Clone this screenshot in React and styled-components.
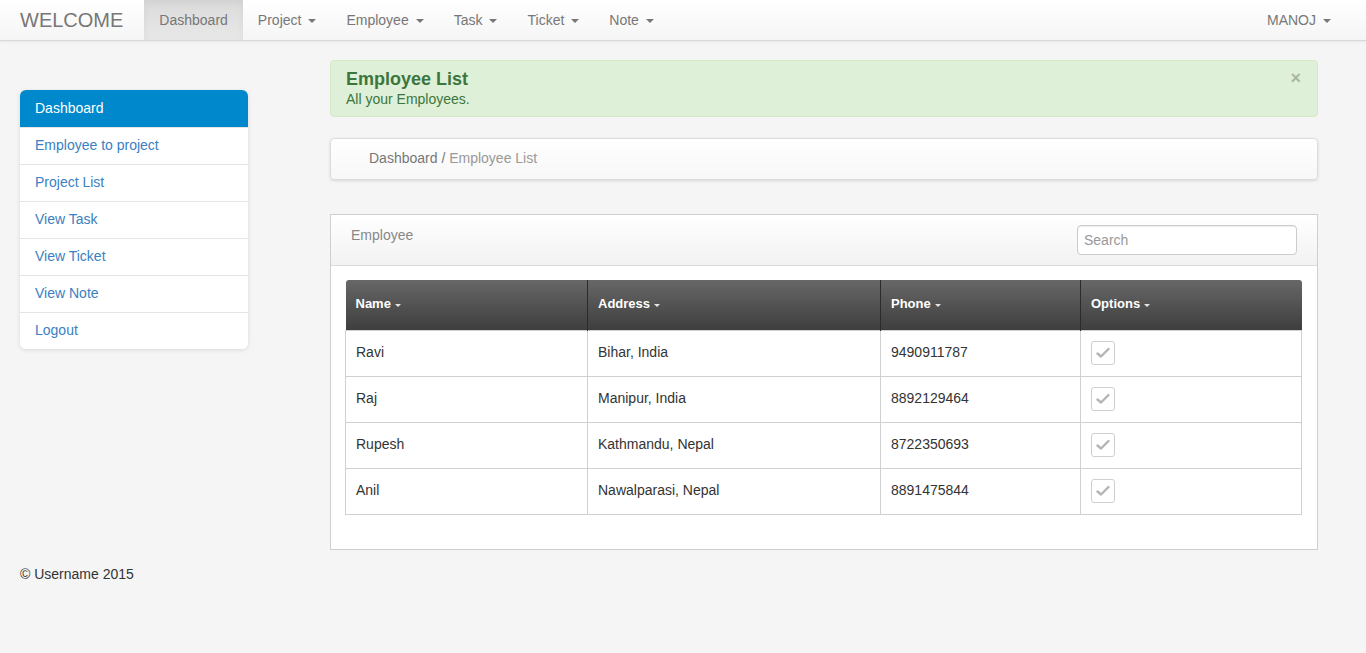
import React from 'react';
import styled, { createGlobalStyle } from 'styled-components';

const Global = createGlobalStyle`
  html, body { margin: 0; padding: 0; }
  body {
    background: #f5f5f5;
    font-family: "Liberation Sans", Arial, sans-serif;
    font-size: 14px;
    color: #333;
    line-height: 1.42857;
  }
  * { box-sizing: border-box; }
`;

const Navbar = styled.div`
  height: 41px;
  background: linear-gradient(to bottom, #ffffff 0%, #f5f5f5 100%);
  border-bottom: 1px solid #d9d9d9;
  box-shadow: 0 1px 3px rgba(0,0,0,0.06);
  display: flex;
  align-items: stretch;
  padding: 0 20px;
`;

const Brand = styled.div`
  font-size: 20px;
  color: #777;
  display: flex;
  align-items: center;
  padding-right: 21px;
`;

const NavItem = styled.div`
  display: flex;
  align-items: center;
  gap: 7px;
  padding: 0 15px;
  color: #777;
  font-size: 14px;
  height: 40px;
  padding-top: 1px;
  background: ${p => p.active ? 'linear-gradient(to bottom, #dbdbdb 0%, #e8e8e8 100%)' : 'transparent'};
  box-shadow: ${p => p.active ? 'inset 0 3px 8px rgba(0,0,0,0.05)' : 'none'};
`;

const Caret = styled.span`
  display: inline-block;
  width: 0;
  height: 0;
  border-top: ${p => p.size || 4}px solid ${p => p.color || '#777'};
  border-left: ${p => p.size || 4}px solid transparent;
  border-right: ${p => p.size || 4}px solid transparent;
  margin-top: 1px;
`;

const Spacer = styled.div`
  flex: 1;
`;

const Page = styled.div`
  display: flex;
  gap: 82px;
  padding: 18px 48px 0 20px;
`;

const SideCol = styled.div`
  width: 228px;
  padding-top: 31px;
  flex-shrink: 0;
`;

const SideList = styled.div`
  background: #fff;
  border-radius: 6px;
  box-shadow: 0 1px 4px rgba(0,0,0,0.12);
  overflow: hidden;
`;

const SideItem = styled.div`
  height: 37px;
  display: flex;
  align-items: center;
  padding: 0 15px;
  font-size: 14px;
  color: ${p => p.active ? '#fff' : '#3a80c2'};
  background: ${p => p.active ? '#0088cc' : '#fff'};
  border-top: ${p => p.first ? 'none' : '1px solid #e5e5e5'};
`;

const MainCol = styled.div`
  flex: 1;
  padding-top: 1px;
`;

const Alert = styled.div`
  position: relative;
  background: #dff0d8;
  border: 1px solid #d6e9c6;
  border-radius: 4px;
  padding: 7px 15px 9px;
  color: #3c763d;
  height: 57px;
`;

const AlertTitle = styled.div`
  font-size: 18px;
  font-weight: bold;
  line-height: 22px;
`;

const AlertText = styled.div`
  font-size: 14px;
  line-height: 18px;
`;

const Close = styled.span`
  position: absolute;
  right: 16px;
  top: 5px;
  font-size: 18px;
  font-weight: bold;
  color: #a8b8a0;
`;

const Breadcrumb = styled.div`
  margin-top: 21px;
  height: 42px;
  background: linear-gradient(to bottom, #ffffff 0%, #f7f7f7 100%);
  border: 1px solid #dcdcdc;
  border-radius: 4px;
  box-shadow: 0 1px 3px rgba(0,0,0,0.12);
  display: flex;
  align-items: center;
  padding: 0 38px;
  color: #777;
`;

const Crumb = styled.span`
  color: ${p => p.current ? '#999' : '#777'};
`;

const Panel = styled.div`
  margin-top: 34px;
  background: #fff;
  border: 1px solid #cfcfcf;
`;

const PanelHead = styled.div`
  height: 51px;
  background: linear-gradient(to bottom, #ffffff 0%, #f2f2f2 100%);
  border-bottom: 1px solid #dcdcdc;
  display: flex;
  justify-content: space-between;
  align-items: flex-start;
  padding: 12px 20px 0 20px;
`;

const PanelTitle = styled.div`
  color: #888;
  font-size: 14px;
  line-height: 17px;
`;

const Search = styled.input`
  width: 220px;
  height: 30px;
  margin-top: -2px;
  border: 1px solid #ccc;
  border-radius: 4px;
  padding: 0 6px;
  font-family: inherit;
  font-size: 14px;
  color: #555;
  background: #fff;
  box-shadow: inset 0 1px 1px rgba(0,0,0,0.075);
  &::placeholder { color: #999; }
`;

const PanelBody = styled.div`
  padding: 14px 15px 34px 14px;
`;

const Table = styled.table`
  width: 100%;
  border-collapse: collapse;
  table-layout: fixed;
`;

const Th = styled.th`
  height: 50px;
  text-align: left;
  padding: 0 10px;
  color: #fff;
  font-size: 13px;
  font-weight: bold;
  background: linear-gradient(to bottom, #676767 0%, #3e3e3e 100%);
  border-left: 1px solid #2b2b2b;
  &:first-child { border-left: none; border-top-left-radius: 3px; }
  &:last-child { border-top-right-radius: 3px; }
`;

const ThInner = styled.span`
  display: inline-flex;
  align-items: center;
  gap: 4px;
`;

const Td = styled.td`
  height: 46px;
  padding: 0 10px;
  border: 1px solid #d0d0d0;
  color: #333;
  font-size: 14px;
`;

const CheckBox = styled.span`
  display: inline-flex;
  align-items: center;
  justify-content: center;
  width: 24px;
  height: 24px;
  border: 1px solid #cfcfcf;
  border-radius: 3px;
  background: #fff;
  vertical-align: middle;
`;

const Footer = styled.div`
  padding: 15px 20px;
  color: #333;
`;

const rows = [
  ['Ravi', 'Bihar, India', '9490911787'],
  ['Raj', 'Manipur, India', '8892129464'],
  ['Rupesh', 'Kathmandu, Nepal', '8722350693'],
  ['Anil', 'Nawalparasi, Nepal', '8891475844'],
];

const Check = () => (
  <svg width="14" height="12" viewBox="0 0 14 12">
    <path d="M1.5 6.5 L5 9.5 L12.5 2" fill="none" stroke="#b5b5b5" strokeWidth="2.4" strokeLinecap="round" strokeLinejoin="round" />
  </svg>
);

export default function App() {
  const menus = ['Project', 'Employee', 'Task', 'Ticket', 'Note'];
  const side = ['Employee to project', 'Project List', 'View Task', 'View Ticket', 'View Note', 'Logout'];
  return (
    <>
      <Global />
      <Navbar>
        <Brand>WELCOME</Brand>
        <NavItem active>Dashboard</NavItem>
        {menus.map(m => (
          <NavItem key={m}>{m} <Caret /></NavItem>
        ))}
        <Spacer />
        <NavItem>MANOJ <Caret /></NavItem>
      </Navbar>
      <Page>
        <SideCol>
          <SideList>
            <SideItem active first>Dashboard</SideItem>
            {side.map(s => <SideItem key={s}>{s}</SideItem>)}
          </SideList>
        </SideCol>
        <MainCol>
          <Alert>
            <AlertTitle>Employee List</AlertTitle>
            <AlertText>All your Employees.</AlertText>
            <Close>×</Close>
          </Alert>
          <Breadcrumb>
            <Crumb>Dashboard</Crumb>&nbsp;/&nbsp;<Crumb current>Employee List</Crumb>
          </Breadcrumb>
          <Panel>
            <PanelHead>
              <PanelTitle>Employee</PanelTitle>
              <Search placeholder="Search" />
            </PanelHead>
            <PanelBody>
              <Table>
                <colgroup>
                  <col style={{ width: 242 }} />
                  <col style={{ width: 293 }} />
                  <col style={{ width: 200 }} />
                  <col />
                </colgroup>
                <thead>
                  <tr>
                    {['Name', 'Address', 'Phone', 'Options'].map(h => (
                      <Th key={h}><ThInner>{h} <Caret size={3} color="#e5e5e5" /></ThInner></Th>
                    ))}
                  </tr>
                </thead>
                <tbody>
                  {rows.map(r => (
                    <tr key={r[0]}>
                      <Td>{r[0]}</Td>
                      <Td>{r[1]}</Td>
                      <Td>{r[2]}</Td>
                      <Td><CheckBox><Check /></CheckBox></Td>
                    </tr>
                  ))}
                </tbody>
              </Table>
            </PanelBody>
          </Panel>
        </MainCol>
      </Page>
      <Footer>© Username 2015</Footer>
    </>
  );
}
